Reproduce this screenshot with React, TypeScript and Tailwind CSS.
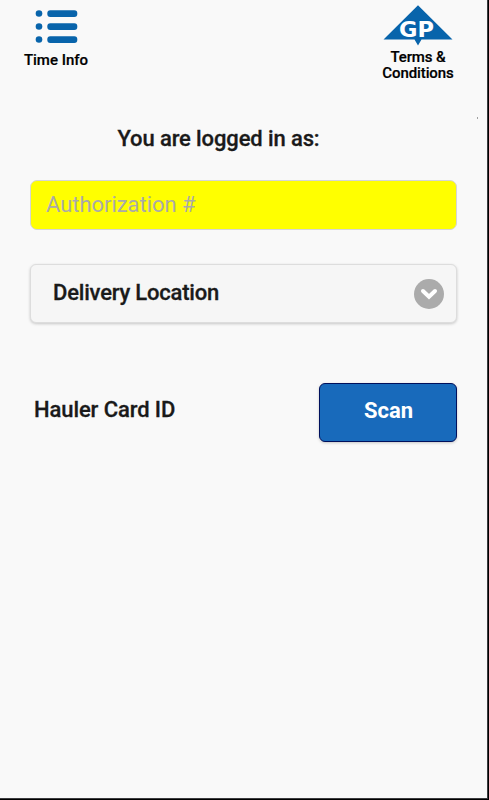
function ListIcon() {
    return (
        <svg width="44" height="36" viewBox="0 0 44 36" fill="#0864ab">
            <circle cx="4" cy="4.5" r="3.3" />
            <circle cx="4" cy="17.5" r="3.3" />
            <circle cx="4" cy="30.5" r="3.3" />
            <rect x="12.3" y="1.3" width="30" height="6.6" rx="3" />
            <rect x="12.3" y="14.3" width="30" height="6.6" rx="3" />
            <rect x="12.3" y="27.3" width="30" height="6.6" rx="3" />
        </svg>
    );
}

function GpLogo() {
    return (
        <svg width="70" height="42" viewBox="0 0 70 42">
            <path d="M35 0.3 L69.5 34.5 H38.5 L35 40.5 L31.5 34.5 H0.5 Z" fill="#0864ab" />
            <text
                x="16"
                y="31.5"
                textLength="35"
                lengthAdjust="spacingAndGlyphs"
                fill="#fff"
                className="font-['DejaVu_Sans',sans-serif] text-[21px] font-bold"
            >
                GP
            </text>
        </svg>
    );
}

function ChevronIcon() {
    return (
        <svg
            width="30"
            height="30"
            viewBox="0 0 30 30"
            fill="none"
            stroke="#fff"
            strokeWidth="4"
            strokeLinecap="round"
        >
            <path d="M9 12 L15 17.8 L21 12" />
        </svg>
    );
}

export default function App() {
    return (
        <main className="relative h-[800px] w-[489px] overflow-hidden border-r border-b border-black bg-[#f9f9f9] font-[Roboto,sans-serif] text-[#1a1a1a]">
            <div className="h-full border-r border-b border-[#3c3c40]">
                {/* Header */}
                <header className="flex h-[124px] items-start justify-between pr-[33px] pl-[23px] text-black">
                    <button className="flex w-[66px] flex-col items-center pt-[9px]">
                        <span className="pl-[2px]">
                            <ListIcon />
                        </span>
                        <span className="mt-[7px] text-[15px] leading-4 font-medium whitespace-nowrap [-webkit-text-stroke:0.2px]">
                            Time Info
                        </span>
                    </button>
                    <button className="flex w-[72px] flex-col items-center pt-[5px]">
                        <GpLogo />
                        <span className="mt-[2px] text-[15px] leading-4 font-medium tracking-[-0.1px] [-webkit-text-stroke:0.2px]">
                            Terms &amp; Conditions
                        </span>
                    </button>
                </header>

                <h1 className="h-14 pr-[50px] text-center text-[22px] leading-[30px] font-medium tracking-[-0.12px] [-webkit-text-stroke:0.3px]">
                    You are logged in as:
                </h1>

                <div className="flex flex-col pr-[30px] pl-[30px]">
                    <input
                        type="text"
                        placeholder="Authorization #"
                        className="h-[50px] rounded-[7px] border border-[#d5d5d5] bg-[#ffff00] px-[15px] pb-px text-[22px] tracking-[-0.04px] placeholder:text-[#aaaaaa]"
                    />

                    {/* Delivery location */}
                    <button className="mt-[34px] flex h-[59px] items-center justify-between rounded-[6px] border border-[#dddddd] bg-[#f6f6f6] pr-[12px] pl-[22px] text-[22px] font-medium shadow-[0_1px_3px_rgba(0,0,0,0.2)]">
                        <span className="pb-[2px] tracking-[-0.2px] [-webkit-text-stroke:0.3px]">
                            Delivery Location
                        </span>
                        <span className="size-[30px] rounded-full bg-[#ababab]">
                            <ChevronIcon />
                        </span>
                    </button>

                    {/* Hauler card */}
                    <div className="mt-[60px] flex h-[59px] items-center justify-between pl-1">
                        <span className="pb-[7px] text-[22px] font-medium tracking-[-0.1px] [-webkit-text-stroke:0.3px]">
                            Hauler Card ID
                        </span>
                        <button className="h-[59px] w-[138px] rounded-[6px] border border-[#00105c] bg-[#186abb] pb-[5px] pl-px text-[22px] font-bold text-white shadow-[0_1px_3px_rgba(0,0,0,0.2)]">
                            Scan
                        </button>
                    </div>
                </div>
            </div>
            <span className="absolute top-[117px] left-[477px] h-[2px] w-px bg-[#a0a0a0]"></span>
        </main>
    );
}
